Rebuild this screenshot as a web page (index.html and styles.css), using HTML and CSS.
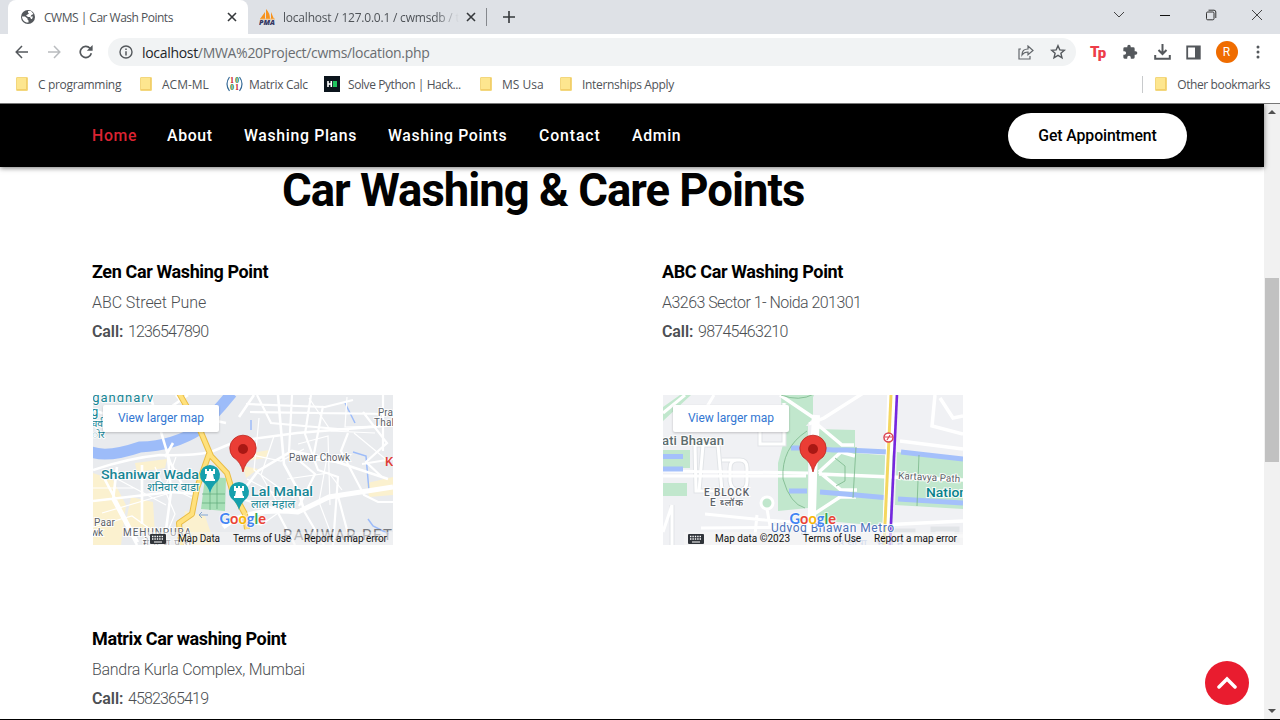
FILE: index.html
```html
<!DOCTYPE html>
<html lang="en">
<head>
<meta charset="utf-8">
<title>CWMS | Car Wash Points</title>
<link rel="stylesheet" href="styles.css">
</head>
<body>
<div class="browser">
  <div class="tabs">
    <div class="tab active">
      <svg class="favicon" width="16" height="16" viewBox="0 0 16 16"><circle cx="8" cy="8" r="7" fill="#54585c"/><path d="M2 7.500h3l2.500 2v1l1 1v2C5 14 2 11 2 7.500ZM8 2h3l2.500 3-2 1-1 1.500h2.500L12 10h-1l-1-2H8L6 6.500l3-2-1-1Z" fill="#fff"/></svg>
      <span class="tab-title t1">CWMS | Car Wash Points</span>
      <svg class="tab-close" width="10" height="10" viewBox="0 0 10 10"><path d="m1 1 8 8M9 1 1 9" stroke="#35383b" stroke-width="1.6"/></svg>
    </div>
    <div class="tab second">
      <svg class="pma" width="17" height="18" viewBox="0 0 17 18"><path d="M1 11 6 4v7ZM7 11V1q4 4 4 10ZM12 11V4l3 7Z" fill="#f7931e"/><path d="M1 11h15" stroke="#f7b35c"/><text x="0" y="17.3" textLength="16" lengthAdjust="spacingAndGlyphs" font-size="7" font-weight="900" font-style="italic" fill="#343763">PMA</text></svg>
      <span class="tab-title t2">localhost / 127.0.0.1 / cwmsdb / t</span>
      <svg class="tab-close" width="10" height="10" viewBox="0 0 10 10"><path d="m1 1 8 8M9 1 1 9" stroke="#35383b" stroke-width="1.6"/></svg>
      <i class="tab-sep"></i>
    </div>
    <svg class="plus" width="12" height="12" viewBox="0 0 12 12"><path d="M6 0v12M0 6h12" stroke="#35383b" stroke-width="1.6"/></svg>
    <div class="window-controls">
      <svg width="12" height="12" viewBox="0 0 12 12"><path d="m1 3 5 5 5-5" fill="none" stroke="#444"/></svg>
      <svg width="12" height="12" viewBox="0 0 12 12"><path d="M1 6.5h10" stroke="#111"/></svg>
      <svg width="12" height="12" viewBox="0 0 12 12"><rect x="1.5" y="3" width="7.5" height="7.8" rx="1.2" fill="none" stroke="#333"/><path d="M3.5 1.2H9Q10.8 1.2 10.8 3v6" fill="none" stroke="#333"/></svg>
      <svg width="12" height="12" viewBox="0 0 12 12"><path d="m1 1 10 10M11 1 1 11" stroke="#444"/></svg>
    </div>
  </div>
  <div class="toolbar">
    <svg width="14" height="14" viewBox="0 0 14 14" class="back"><path d="M13 7H1.5M7 1 1.2 7 7 13" fill="none" stroke="#54585c" stroke-width="1.5"/></svg>
    <svg width="14" height="14" viewBox="0 0 14 14" class="forward"><path d="M1 7h11.5M7 1l5.8 6L7 13" fill="none" stroke="#b9bcbf" stroke-width="1.5"/></svg>
    <svg width="14" height="14" viewBox="0 0 14 14" class="reload"><path d="M12.3 8.3A5.6 5.6 0 1 1 11 3.2l1.5 1.5" fill="none" stroke="#54585c" stroke-width="1.7"/><path d="M13.6 0v5.8H7.8Z" fill="#54585c"/></svg>
    <div class="omnibox">
      <svg width="14" height="14" viewBox="0 0 14 14"><circle cx="7" cy="7" r="6" fill="none" stroke="#54585c" stroke-width="1.4"/><path d="M7 6.2v4.2M7 3.4V5" stroke="#54585c" stroke-width="1.5"/></svg>
      <span class="url"><b>localhost</b>/MWA%20Project/cwms/location.php</span>
      <svg class="share" width="16" height="15" viewBox="0 0 16 15"><path d="M3 4H1v10h11v-3M4 10q0-6 6-6V1l5 4.5-5 4.3V7Q6 7 4 10Z" fill="none" stroke="#62666a" stroke-width="1.2"/></svg>
      <svg class="star" width="16" height="16" viewBox="0 0 16 16"><path d="m8 1.7 1.8 4.2 4.6.4-3.5 3 1.1 4.5L8 11.4l-4 2.4 1.1-4.5-3.5-3 4.6-.4Z" fill="none" stroke="#54585c" stroke-width="1.4"/></svg>
    </div>
    <div class="actions">
      <b class="tp">T<span>p</span></b>
      <svg width="16" height="16" viewBox="0 0 24 24"><path d="M20.5 11H19V7a2 2 0 0 0-2-2h-4V3.5a2.5 2.5 0 0 0-5 0V5H4a2 2 0 0 0-2 2v3.8h1.5a2.7 2.7 0 0 1 0 5.4H2V20a2 2 0 0 0 2 2h3.8v-1.5a2.7 2.7 0 0 1 5.4 0V22H17a2 2 0 0 0 2-2v-4h1.5a2.5 2.5 0 0 0 0-5Z" fill="#54585c"/></svg>
      <svg width="17" height="16" viewBox="0 0 17 16"><path d="M8.5 0v9.5M4.5 6l4 4 4-4M1.2 11v3.7h14.6V11" fill="none" stroke="#54585c" stroke-width="2"/></svg>
      <svg width="15" height="15" viewBox="0 0 15 15"><path d="M1.2 1.5h12.6v12H1.2Z" fill="none" stroke="#54585c" stroke-width="1.8"/><path d="M9 1h5v13H9Z" fill="#54585c"/></svg>
      <span class="avatar">R</span>
      <svg width="4" height="14" viewBox="0 0 4 14"><g fill="#54585c"><circle cx="2" cy="2" r="1.5"/><circle cx="2" cy="7" r="1.5"/><circle cx="2" cy="12" r="1.5"/></g></svg>
    </div>
  </div>
  <div class="bookmarks">
    <span class="bm b1"><i class="folder"></i><em>C programming</em></span>
    <span class="bm b2"><i class="folder"></i><em>ACM-ML</em></span>
    <span class="bm b3"><svg width="17" height="16" viewBox="0 0 17 16"><path d="M3.5 1q-5 7 0 14M13.5 1q5 7 0 14" fill="none" stroke="#376b98" stroke-width="1.2"/><g font-family="Liberation Serif" font-weight="bold" font-size="8"><text x="4" y="7.2" fill="#c31924">1</text><text x="9" y="7.2" fill="#25843b">0</text><text x="4" y="14" fill="#25843b">0</text><text x="9" y="14" fill="#c31924">1</text></g></svg><em>Matrix Calc</em></span>
    <span class="bm b4"><svg width="16" height="16" viewBox="0 0 16 16"><path d="M0 0h16v16H0Z" fill="#0b141c"/><path d="M4 5v6M7.3 5v6M4 8h3" stroke="#fff" stroke-width="1.6"/><path d="M9 5h4v6H9Z" fill="#1fc45e"/></svg><em>Solve Python | Hack...</em></span>
    <span class="bm b5"><i class="folder"></i><em>MS Usa</em></span>
    <span class="bm b6"><i class="folder"></i><em>Internships Apply</em></span>
    <span class="bm b7"><i class="folder"></i><em>Other bookmarks</em></span>
  </div>
</div>
<div class="viewport">
  <main class="page">
    <nav class="nav">
      <a class="n1">Home</a><a class="n2">About</a><a class="n3">Washing Plans</a><a class="n4">Washing Points</a><a class="n5">Contact</a><a class="n6">Admin</a>
      <a class="cta"><span>Get Appointment</span></a>
    </nav>
    <h1><span>Car Washing &amp; Care Points</span></h1>
    <div class="grid">
      <section class="point">
        <h3 class="h-zen">Zen Car Washing Point</h3>
        <p class="a-zen">ABC Street Pune</p>
        <p class="call"><b>Call:</b><span>1236547890</span></p>
        <svg class="map" width="300" height="150" viewBox="0 0 300 150">
          <rect width="300" height="150" fill="#e9ebee"/>
          <g fill="#fbf1cf"><path d="M0 78 20 85 33 110 28 150H0ZM38 102l22 5 2 32-30-8ZM42 68l32-4-2 9-28 4ZM92 116l20 5 10 29H88ZM146 60l30-5-3 8-27 4ZM150 71l15 3-12 9ZM274 88l26-6v18l-24 2Z"/></g>
          <path d="M-2 57Q15 63 47 52 81 51 107 34L128 11 139-2" fill="none" stroke="#9dbcf9" stroke-width="11"/>
          <g fill="none" stroke="#9dbcf9" stroke-width="1.5"><path d="m252 8 10 20M260 57l13 4 3 35M275 124l5 7 16 8M158 25v10"/></g>
          <g fill="none" stroke="#fff">
            <path d="m57 0 20 67 12 22M0 75q36-12 67-15 30 1 51-3l26-11 60-8 98-8M0 15l45 15 30-16L95 0M83 0l17 21 33 7M146 22l15-22M0 106l78-9 25 2M10 81l35 66M49 70v59M24 72l-4 33 24 45M75 62l3 35-7 53M80 48l-8 14M150 96l15-20 34-20 36 8 60 20M185 0l6 69 14 26 6 20" stroke-width="2.6"/>
            <path d="M130 132q25-20 75-15l31-15 64-10" stroke-width="5"/>
            <path d="M211 116l20 34M145 103l38 11 19 36M164 0l14 28 78 7M199 0l-3 57 26 22-16 32M218 0l-6 39 13 36 20 7-5 68M157 17l140 2M153 9l79 3 28-7M255 38l-7 18 23 44 14 7 15 0M230 11l-10 53 30 4M270 17l24 31-21 19 16 15M245 101l13 49M269 69l31-5M290 0v56" stroke-width="2.2"/>
            <path d="M0 93h42M15 79l58 31M9 118l68-20M0 132l39-11 25 18M83 62l-10 28 30 15M62 72l20 47-8 19M150 58l38 8 23-12M181 41l-13 39 20 34M194 84l42-6 13 17M166 23l-5 52 40 28M205 49l30-8 2 69M216 3l22 33 44 2M234 62l-8 45 11 29M254 2l-2 30 32-1M261 38l34 28M143 121l25 9 20-14M154 84l35 18-5 14" stroke-width="1.2"/>
          </g>
          <path d="M86-2 107 35l11 26 16 17 5 17 13 24M116 59l-12 34-5 26-13 9 2 22M152 119l2 15" fill="none" stroke="#e9bd46" stroke-width="6" stroke-linejoin="round"/>
          <path d="M86-2 107 35l11 26 16 17 5 17 13 24M116 59l-12 34-5 26-13 9 2 22M152 119l2 15" fill="none" stroke="#ffe17d" stroke-width="4" stroke-linejoin="round"/>
          <path d="m112 82 21 1-1 33-24-2Z" fill="#a7dfb7"/><path d="M117 83v32M124 83v31M109 99h23M109 108h23" stroke="#60a979" stroke-width=".7"/>
          <path d="M115 120h-9l3-3m-3 3 3 3" fill="none" stroke="#83a6d0"/>
          <g class="teal halo"><text x="-5" y="7" textLength="65" font-size="13">igandharv</text><text x="-2" y="21" font-size="13">g</text><text x="-2" y="32" font-size="10">चर्व</text><text x="-1" y="43" font-size="10">ोर</text>
          <text x="8" y="84" textLength="98" font-weight="500" font-size="13" lengthAdjust="spacingAndGlyphs">Shaniwar Wada</text><text x="54" y="96" textLength="52" font-size="11" lengthAdjust="spacingAndGlyphs">शनिवार वाडा</text><text x="158" y="101" textLength="62" font-weight="500" font-size="13" lengthAdjust="spacingAndGlyphs">Lal Mahal</text><text x="158" y="113" textLength="44" font-size="11" lengthAdjust="spacingAndGlyphs">लाल महाल</text></g>
          <g class="gray halo"><text x="196" y="66" textLength="61">Pawar Chowk</text><text x="285" y="21" textLength="15">Pra</text><text x="281" y="31" textLength="20">Thal</text><text x="1" y="131" textLength="21">Paar</text><text x="-2" y="141" textLength="12">wk</text><text x="30" y="141" textLength="68">MEHUNPURA</text><text x="50" y="151" textLength="48">मेहुणपुरा</text></g>
          <text x="190" y="145" textLength="121" font-size="15" fill="#777a80">RAVIWAR PETH</text><text x="292" y="71" font-size="13" font-weight="500" fill="#df3e35">K</text>
          <g id="teal-pin"><path d="M117 98q-2-7-8-12a10 10 0 1 1 16 0q-6 5-8 12Z" fill="#16a0ad"/><path d="M112 74h2v2h2v-2h2v2h2v-2h2v5h-2l1 5h1v2H112v-2h1l1-5h-2Z" fill="#fff"/></g>
          <use href="#teal-pin" x="29" y="17"/>
          <g id="red-pin"><path d="M150 77q-2-10-10-15a13.2 13.2 0 1 1 20 0q-8 5-10 15Z" fill="#ea3d35" stroke="#bd271f" stroke-width=".8"/><circle cx="150" cy="54" r="5" fill="#a91814"/></g>
          <g id="view-link"><rect x="10" y="10" width="116" height="27" rx="2" fill="#fff" class="card"/><text x="25" y="27" textLength="86" font-size="12" fill="#3276d2">View larger map</text></g>
          <g id="logo"><text x="126.500" y="128.500" textLength="46.500" font-size="14.500" class="logo"><tspan fill="#4285f4">G</tspan><tspan fill="#ea4335">o</tspan><tspan fill="#f7b606">o</tspan><tspan fill="#4285f4">g</tspan><tspan fill="#34a853">l</tspan><tspan fill="#ea4335">e</tspan></text></g>
          <rect x="53" y="137" width="247" height="13" fill="#f5f5f5" opacity=".5"/>
          <g id="keyboard"><rect x="57" y="139" width="16" height="10" rx="1" fill="#30343a"/><path d="M59 141.500h12M59 144h12" stroke="#fff" stroke-width="1.300" stroke-dasharray="1.400 1"/><path d="M61 147h8" stroke="#fff"/></g>
          <g class="legal"><text x="85" y="146.500" textLength="42">Map Data</text><text x="140" y="146.500" textLength="58">Terms of Use</text><text x="211" y="146.500" textLength="83">Report a map error</text></g>
        </svg>
      </section>
      <section class="point">
        <h3 class="h-abc">ABC Car Washing Point</h3>
        <p class="a-abc">A3263 Sector 1- Noida 201301</p>
        <p class="call"><b>Call:</b><span class="c2">98745463210</span></p>
        <svg class="map" width="300" height="150" viewBox="0 0 300 150">
          <rect width="300" height="150" fill="#f0f1f4"/>
          <g fill="#c1e7cd"><path d="M0 12 17 0h11L0 26ZM118 0h32v23l-8 9h-23ZM125 31h20v82l-30 3V68ZM154 34l38 1v23l40 3-3 71-76-7ZM0 55h27v18H0ZM0 88h24v13H0ZM234 57l66 8v49l-68-4ZM143 0h8l-4 9Z"/></g>
          <g fill="none" stroke="#e1e4e7" stroke-width="5"><path d="M32 50h23l4 46H33ZM40 50l-4 46M59 65h18q7 0 7 8v13q0 9-8 9t-9-9V73q0-8 7-8ZM97 17v32h24V8M9 110v40M230 136h20v12h20v-14h24v14"/></g>
          <g fill="none" stroke="#fff">
            <path d="m22 0-22 18M51 0 36 25M32 50h23l4 46H33ZM40 50l-4 46M0 76l145 2M0 81h143M59 65h18q7 0 7 8v13q0 9-8 9t-9-9V73q0-8 7-8ZM97 17v32h24V8M42 119l60 6 42 3M92 140l2-20M104 114l3 17M9 110 0 137M9 110v40M38 133l105-1" stroke-width="3"/><circle cx="104" cy="108" r="6" fill="#c1e7cd" stroke-width="3"/>
            <path d="m146 29 15-6 44-28M151 23l-34-23M155 30l24 20h12M156 77l22-20 14 4M156 77l22 18h16M151 119l26-17h16M149 79l-4 71M156 79l144 6M226-2l-5 150M237 46l63 8M272 0l-3 31 31 8M277 3l13 20 10-2M218 130l82-4M232 140l68 1" stroke-width="3.500"/>
            <path d="m153 20-3 61-2 69" stroke-width="8"/>
          </g>
          <g fill="none" stroke="#a4c0fb" stroke-width="5"><path d="M0 61.500h20M0 74h20M128 53h17M126 96h18M157 54l13 1h14l41 2M238 57q36 4 62 7M157 97l25 2 44 4M235 104l65 4"/></g>
          <g fill="none" stroke="#79b689" stroke-width=".8"><path d="M144 36q-26 17-24 48 7 25 22 29M193 52l-3 51M172 63l10 8v15l-9 5M230 56l-5 51M256 60l-2 51M118 0q18 7 33-1"/></g>
          <path d="m229 0-7 150" stroke="#fff" stroke-width="7"/><path d="m228 0-7 150" stroke="#f4d760" stroke-width="3"/><path d="m234-1-7 151" stroke="#7627df" stroke-width="2.600"/><circle cx="225.500" cy="42.500" r="4.500" fill="#fff" stroke="#db4250" stroke-width="1.500"/><path d="m222 42h7m-5 3 3-5" stroke="#db4250" stroke-width="1.200"/>
          <g class="gray halo"><text x="-1" y="50" textLength="62" font-size="13" font-weight="500" fill="#5d6d6d">ati Bhavan</text><text x="41" y="101" textLength="45" font-weight="500">E BLOCK</text><text x="47" y="111" textLength="33" font-weight="500">E ब्लॉक</text><text x="235" y="84" textLength="62" transform="rotate(3 235 84)">Kartavya Path</text></g>
          <text x="263" y="102" textLength="41" font-size="13" font-weight="500" fill="#08818b" class="halo" lengthAdjust="spacingAndGlyphs">Nation</text><text x="108" y="137" textLength="123" font-size="12" fill="#4b72bb" class="halo">Udyog Bhawan Metro</text><text x="175" y="152" textLength="65" font-size="11" fill="#91a8dc">उद्योग भवन</text>
          <use href="#red-pin"/><use href="#view-link"/><use href="#logo"/>
          <rect x="21" y="137" width="279" height="13" fill="#f5f5f5" opacity=".7"/><use href="#keyboard" x="-32"/>
          <g class="legal"><text x="52" y="146.500" textLength="75">Map data ©2023</text><text x="140" y="146.500" textLength="58">Terms of Use</text><text x="211" y="146.500" textLength="83">Report a map error</text></g>
        </svg>
      </section>
      <section class="point">
        <h3 class="h-mat">Matrix Car washing Point</h3>
        <p class="a-mat">Bandra Kurla Complex, Mumbai</p>
        <p class="call"><b>Call:</b><span>4582365419</span></p>
      </section>
    </div>
    <a class="top-button"><svg width="20" height="14" viewBox="0 0 20 14"><path d="m2 11 8-8 8 8" fill="none" stroke="#fff" stroke-width="3.500" stroke-linecap="round"/></svg></a>
  </main>
  <aside class="scrollbar"><i class="up"></i><i class="thumb"></i><i class="down"></i></aside>
</div>
</body>
</html>
```
FILE: styles.css
```css
*{box-sizing:border-box}
body{margin:0;width:1280px;height:720px;overflow:hidden;display:flex;flex-direction:column;background:#fff;font-family:Roboto,"Noto Sans",sans-serif;white-space:nowrap}
svg{display:block;flex:none}
.browser{height:104px;flex:none;font-family:"Open Sans","Noto Sans",sans-serif;border-bottom:1px solid #777;color:#4f5358}
.tabs{height:34px;background:#dee1e6;display:flex;align-items:center;padding-left:8px;position:relative}
.tab{display:flex;align-items:center;height:34px;font-size:12px}
.tab.active{width:240px;background:#fff;border-radius:8px 8px 0 0;padding:0 11px 0 12px}
.favicon{margin-right:8px}
.tab-title{overflow:hidden;flex:none}
.t1{width:136px;letter-spacing:-.5px}
.tab-close{margin-left:auto}
.tab.second{width:239px;padding-left:11px}
.pma{margin-right:7px}
.t2{width:176px;letter-spacing:-.21px;mask-image:linear-gradient(90deg,#000 86%,transparent)}
.tab-sep{width:1px;height:18px;background:#85888d;margin-left:10px}
.plus{margin-left:16px}
.window-controls{margin-left:auto;display:flex;gap:34px;padding:0 17px 4px 0}
.toolbar{height:36px;display:flex;align-items:center;padding-left:15px}
.forward{margin-left:18px}
.reload{margin-left:18px}
.omnibox{height:28px;width:968px;margin-left:15px;border-radius:14px;background:#f1f3f4;display:flex;align-items:center;padding:0 10px 0 11px}
.url{font-size:14px;letter-spacing:-.31px;margin-left:9px;color:#696d71}
.url b{font-weight:400;color:#222529}
.share{margin-left:auto}
.star{margin-left:16px}
.actions{display:flex;align-items:center;margin-left:14px;flex:1}
.actions svg{margin-right:15.500px}
.actions svg:last-child{margin:0 0 0 18px}
.tp{color:#ed3d49;font:900 15px/16px Roboto,sans-serif;width:16px;margin-right:16px;letter-spacing:-1px}
.tp span{position:relative;top:1px}
.avatar{width:22px;height:22px;border-radius:50%;background:#ef6c00;color:#fff;font:12px/22px Roboto,sans-serif;text-align:center;margin-left:-1px}
.bookmarks{display:flex;align-items:center;height:28px;font-size:12px;padding-left:16px}
.bm{display:flex;align-items:center;gap:9px}
.bm em{font-style:normal;letter-spacing:-.33px}
.bm.b2 em,.bm.b5 em{letter-spacing:0}
.bm.b3 em{letter-spacing:-.3px}
.bm.b4 em{letter-spacing:-.42px}
.bm.b7 em{letter-spacing:-.38px}
.folder{width:12px;height:14px;background:#fde68f;border:1px solid #f3d77d;border-radius:1px;box-shadow:inset -1px -1px 0 #f2ce6a}
.b1,.b2,.b5,.b6,.b7{gap:10px}
.b1{width:124px}.b2{width:86px}.b3{width:98px;gap:6px}.b4{width:156px;gap:8px}.b5{width:80px}.b6{width:140px}
.b7{margin-left:auto;border-left:1px solid #c8cacc;padding-left:12px;margin-right:10px;height:17px}
.viewport{height:616px;display:flex;border-bottom:1px solid #000;overflow:hidden}
.page{width:1264px;position:relative;color:#4c4f53}
.nav{height:63px;background:#000;display:flex;align-items:center;padding-left:92px;color:#fff;font-size:15.800px;font-weight:500;letter-spacing:.67px;box-shadow:0 1px 5px #0008}
.n1{width:75px;color:#db2332}.n2{width:77px}.n3{width:144px}.n4{width:151px}.n5{width:93px;letter-spacing:.9px}.n6{width:50px}
.cta{width:179px;height:46px;border-radius:23px;background:#fff;color:#000;margin-left:auto;margin-right:77px;display:flex;align-items:center;justify-content:center;letter-spacing:-.1px;font-size:15.800px}
h1{font-size:45.500px;line-height:52px;height:80px;margin:-2px 0 0;padding-left:282px;font-weight:700;color:#020202;letter-spacing:-1.02px}
.grid{display:grid;grid-template-columns:570px 570px;grid-template-rows:367px auto;padding-left:92px;padding-top:15px}
h3{font-size:18px;line-height:24px;color:#000;font-weight:700;margin:0 0 7px;letter-spacing:-.38px}
p{font-size:16px;font-weight:300;line-height:24px;margin:0 0 5px}
.a-zen{letter-spacing:-.08px}
.a-abc{letter-spacing:-.54px}
.a-mat{letter-spacing:-.28px}
.call{display:flex}
.call b{width:36px;font-weight:600;letter-spacing:-.1px}
.call span{letter-spacing:-.86px}
.call .c2{letter-spacing:-.73px}
.map{margin:51px 0 0 1px;overflow:hidden}
.map text{font-family:Roboto,"Noto Sans","Noto Sans Devanagari",sans-serif}
.teal{fill:#168695}
.gray{fill:#5d6269;font-size:10px}
.halo text,text.halo{paint-order:stroke;stroke:#fffd;stroke-width:2px}
.legal{font-size:10px;fill:#111}
.map .logo{font-family:Lato,sans-serif;font-weight:700;paint-order:stroke;stroke:#fff9;stroke-width:2px}
.card{filter:drop-shadow(0 1px 1px #0003)}
.top-button{position:absolute;right:15px;top:557px;width:44px;height:44px;border-radius:50%;background:#e91c2f;display:flex;align-items:center;justify-content:center}
.scrollbar{width:16px;background:#f1f1f1;display:flex;flex-direction:column;align-items:center}
.up{margin-top:6px;border:4px solid transparent;border-top:0;border-bottom:4px solid #505050}
.thumb{width:14px;height:184px;margin-top:164px;background:#c1c1c1}
.down{margin-top:auto;margin-bottom:6px;border:4px solid transparent;border-bottom:0;border-top:4px solid #505050}
```
